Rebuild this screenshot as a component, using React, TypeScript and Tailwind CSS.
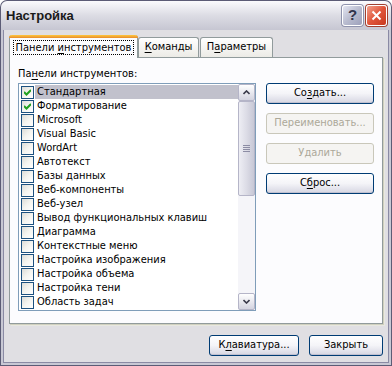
import React from "react";

const font = { fontFamily: '"DejaVu Sans Condensed", "DejaVu Sans", sans-serif' };
const titleFont = { fontFamily: '"Liberation Sans", Arial, sans-serif' };

function U({ children }: { children: React.ReactNode }) {
  return <span className="underline underline-offset-[2px]">{children}</span>;
}

function Check() {
  return (
    <svg width="7" height="7" viewBox="0 0 7 7" className="block">
      <path d="M0 3 L2.5 5.5 L7 1" stroke="#21a121" strokeWidth="2" fill="none" />
    </svg>
  );
}

function Checkbox({ checked }: { checked?: boolean }) {
  return (
    <div className="w-[13px] h-[13px] border border-[#1c5180] bg-gradient-to-br from-[#dcdcd7] via-[#f4f4f0] to-white flex items-center justify-center shrink-0">
      {checked && <Check />}
    </div>
  );
}

function XPButton({
  children,
  disabled,
  w,
}: {
  children: React.ReactNode;
  disabled?: boolean;
  w: string;
}) {
  if (disabled)
    return (
      <div
        className={`${w} h-[21px] rounded-[3px] border border-[#c9c7ba] bg-[#f5f4f2] text-[#aca899] text-[11px] flex items-center justify-center`}
      >
        {children}
      </div>
    );
  return (
    <div
      className={`${w} h-[21px] rounded-[3px] border border-[#003c74] bg-gradient-to-b from-white via-[#f4f4f8] to-[#d6d6e2] text-black text-[11px] flex items-center justify-center shadow-[inset_0_-1px_0_#c0c0d0]`}
    >
      {children}
    </div>
  );
}

const items: [string, boolean][] = [
  ["Стандартная", true],
  ["Форматирование", true],
  ["Microsoft", false],
  ["Visual Basic", false],
  ["WordArt", false],
  ["Автотекст", false],
  ["Базы данных", false],
  ["Веб-компоненты", false],
  ["Веб-узел", false],
  ["Вывод функциональных клавиш", false],
  ["Диаграмма", false],
  ["Контекстные меню", false],
  ["Настройка изображения", false],
  ["Настройка объема", false],
  ["Настройка тени", false],
  ["Область задач", false],
];

function ScrollBtn({ dir }: { dir: "up" | "down" }) {
  return (
    <div className="w-[17px] h-[17px] rounded-[2px] border border-[#b5b5c8] bg-gradient-to-b from-white to-[#d4d4e0] flex items-center justify-center">
      <svg width="7" height="5" viewBox="0 0 7 5">
        {dir === "up" ? (
          <path d="M0.5 4 L3.5 1 L6.5 4" stroke="#3a3a4a" strokeWidth="1.6" fill="none" />
        ) : (
          <path d="M0.5 1 L3.5 4 L6.5 1" stroke="#3a3a4a" strokeWidth="1.6" fill="none" />
        )}
      </svg>
    </div>
  );
}

export default function App() {
  return (
    <div
      className="w-[392px] h-[366px] flex flex-col bg-[#5c5c76] rounded-t-[7px] p-[1px] overflow-hidden"
      style={font}
    >
      {/* Title bar */}
      <div className="h-[29px] shrink-0 rounded-t-[6px] bg-gradient-to-b from-[#fbfbfd] via-[#dcdce4] to-[#c6c6d2] flex items-center pl-[5px] pr-[4px]">
        <div className="text-[13px] font-bold text-[#1a1a1a] flex-1 pt-[1px]" style={titleFont}>
          Настройка
        </div>
        <div className="flex gap-[3px]">
          <div className="w-[21px] h-[21px] rounded-[3px] border border-white bg-gradient-to-br from-[#e4e6f2] via-[#b9bccf] to-[#9da1bb] flex items-center justify-center text-[#30344c] text-[15px] font-bold shadow-[0_0_0_1px_#8f93ad]" style={titleFont}>
            ?
          </div>
          <div className="w-[21px] h-[21px] rounded-[3px] border border-white bg-gradient-to-br from-[#f0a08c] via-[#e0553a] to-[#c8381e] flex items-center justify-center shadow-[0_0_0_1px_#a04030]">
            <svg width="11" height="11" viewBox="0 0 11 11">
              <path d="M1.5 1.5 L9.5 9.5 M9.5 1.5 L1.5 9.5" stroke="white" strokeWidth="2" />
            </svg>
          </div>
        </div>
      </div>

      {/* Body frame */}
      <div className="flex-1 border-x-2 border-b-2 border-[#c8c8d4]">
        <div className="h-full border-x border-b border-[#8a8aa4] bg-[#e0dfe3] flex flex-col text-[11px] text-black">
          {/* Tabs */}
          <div className="h-[27px] flex items-end pl-[5px] pt-[4px]">
            <div className="h-[23px] -mb-[1px] relative z-10 bg-[#fcfcfe] border-x border-[#919b9c] rounded-t-[3px] flex flex-col w-[129px]">
              <div className="h-[3px] rounded-t-[3px] bg-gradient-to-b from-[#ffc83c] to-[#e68b2c] -mx-[1px]" />
              <div className="flex-1 flex items-center justify-center pb-[2px]">
                <span className="border border-dotted border-black px-[2px] leading-[13px]">
                  Панели <U>и</U>нструментов
                </span>
              </div>
            </div>
            <div className="h-[20px] w-[61px] border border-b-0 border-[#919b9c] rounded-t-[3px] bg-gradient-to-b from-white to-[#ecebe6] flex items-center justify-center">
              <span>
                <U>К</U>оманды
              </span>
            </div>
            <div className="h-[20px] w-[73px] ml-[1px] border border-b-0 border-[#919b9c] rounded-t-[3px] bg-gradient-to-b from-white to-[#ecebe6] flex items-center justify-center">
              <span>
                П<U>а</U>раметры
              </span>
            </div>
          </div>

          {/* Panel */}
          <div className="ml-[5px] mr-[5px] h-[267px] border border-[#919b9c] bg-[#fcfcfe] shadow-[1px_1px_0_#d0d0bf,2px_2px_0_#e8e8e0] flex flex-col pl-[8px] pr-[7px]">
            <div className="h-[25px] pt-[9px] leading-[14px]">
              Па<U>н</U>ели инструментов:
            </div>
            <div className="flex gap-[10px]">
              <div className="w-[238px] h-[228px] border border-[#7f9db9] bg-white flex">
                <div className="flex-1 pt-[1px] pl-[2px] flex flex-col">
                  {items.map(([label, checked], i) => (
                    <div key={label} className="h-[14px] flex items-center">
                      <Checkbox checked={checked} />
                      <div
                        className={`ml-[1px] flex-1 h-[14px] pl-[2px] flex items-center whitespace-nowrap ${
                          i === 0 ? "bg-[#c1c1cc]" : ""
                        }`}
                      >
                        {label}
                      </div>
                    </div>
                  ))}
                </div>
                <div className="w-[17px] bg-[#f5f5f9] flex flex-col">
                  <ScrollBtn dir="up" />
                  <div className="h-[95px] rounded-[2px] border border-[#b5b5c8] bg-gradient-to-r from-[#eeeef4] via-[#dcdce6] to-[#c8c8d6] flex items-center justify-center">
                    <div className="flex flex-col gap-[1px]">
                      <div className="w-[7px] h-[1px] bg-[#8c8ca4]" />
                      <div className="w-[7px] h-[1px] bg-[#8c8ca4]" />
                      <div className="w-[7px] h-[1px] bg-[#8c8ca4]" />
                      <div className="w-[7px] h-[1px] bg-[#8c8ca4]" />
                    </div>
                  </div>
                  <div className="flex-1" />
                  <ScrollBtn dir="down" />
                </div>
              </div>
              <div className="flex flex-col gap-[9px] pt-[0px]">
                <XPButton w="w-[108px]">
                  <span>
                    Со<U>з</U>дать...
                  </span>
                </XPButton>
                <XPButton w="w-[108px]" disabled>
                  Переименовать...
                </XPButton>
                <XPButton w="w-[108px]" disabled>
                  Удалить
                </XPButton>
                <XPButton w="w-[108px]">
                  <span>
                    С<U>б</U>рос...
                  </span>
                </XPButton>
              </div>
            </div>
          </div>

          {/* Bottom buttons */}
          <div className="flex-1 flex items-center justify-end gap-[10px] pr-[5px] pt-[5px]">
            <XPButton w="w-[90px]">
              <span>
                К<U>л</U>авиатура...
              </span>
            </XPButton>
            <XPButton w="w-[74px]">Закрыть</XPButton>
          </div>
        </div>
      </div>
    </div>
  );
}
